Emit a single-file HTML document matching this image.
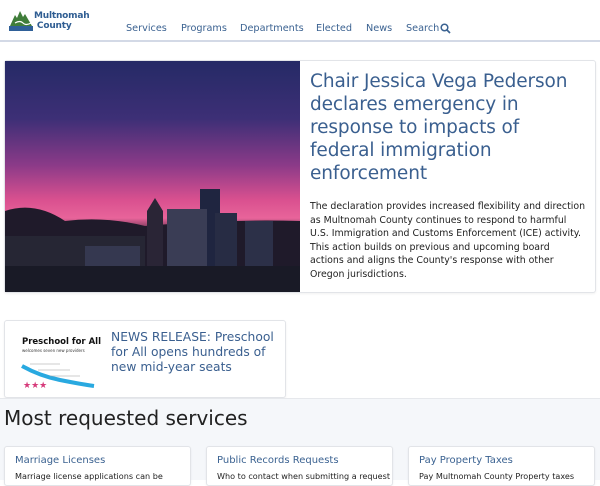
<!DOCTYPE html>
<html><head><meta charset="utf-8"><style>
*{box-sizing:border-box;margin:0;padding:0}
body{width:600px;height:480px;overflow:hidden;background:#fff;font-family:"DejaVu Sans","Liberation Sans",sans-serif;position:relative}
.abs{position:absolute}
.nav{position:absolute;top:23px;font-size:9.7px;line-height:12px;color:#3b6291;white-space:nowrap}
.hdrline{top:40px;left:0;width:600px;height:2px;background:#d3d9e6}
.card{border:1px solid #e2e4e8;border-radius:3px;background:#fff;box-shadow:0 1px 2px rgba(0,0,0,.06)}
.h1{left:310px;top:70px;width:268px;font-size:18.5px;line-height:23px;color:#3a5f8f;letter-spacing:-.1px}
.p1{left:310px;top:200px;width:278px;font-size:9.4px;line-height:13.6px;color:#222;white-space:nowrap}
.scard{top:446px;height:40px;width:187px}
.st{font-size:10px;color:#3b6291;position:absolute;left:10px;top:8px;white-space:nowrap}
.sd{font-size:8.1px;color:#222;position:absolute;left:10px;top:24px;white-space:nowrap}
</style></head><body>
<svg class="abs" style="left:9px;top:9px" width="26" height="24" viewBox="0 0 26 24">
<path d="M1 17 L6 6 L8 9 L11 2 L14 8 L16 5 L23 17 Z" fill="#3f7d3a"/>
<path d="M6 14 Q11 11 14 14 T22 14" stroke="#fff" stroke-width="1.2" fill="none"/>
<path d="M0 17 H24 V22 H0 Z" fill="#2f6098"/>
</svg>
<div class="abs" style="left:34px;top:12px;font-size:9px;line-height:9.5px;font-weight:bold;color:#2f5d92;letter-spacing:-.2px">Multnomah<br>&nbsp;County</div>
<div class="nav" style="left:126px">Services</div>
<div class="nav" style="left:181px">Programs</div>
<div class="nav" style="left:240px">Departments</div>
<div class="nav" style="left:316px">Elected</div>
<div class="nav" style="left:366px">News</div>
<div class="nav" style="left:406px">Search</div>
<svg class="abs" style="left:440px;top:23px" width="11" height="11" viewBox="0 0 11 11"><circle cx="4.5" cy="4.5" r="3.3" stroke="#3b6291" stroke-width="1.5" fill="none"/><path d="M7 7 L10 10" stroke="#3b6291" stroke-width="1.7"/></svg>
<div class="abs hdrline"></div>

<div class="abs card" style="left:4px;top:60px;width:592px;height:233px"></div>
<svg class="abs" style="left:5px;top:61px" width="295" height="231" viewBox="0 0 295 231">
<defs><linearGradient id="g" x1="0" y1="0" x2="0" y2="1">
<stop offset="0" stop-color="#252a66"/><stop offset=".25" stop-color="#3d2f76"/><stop offset=".45" stop-color="#8b3a88"/><stop offset=".6" stop-color="#d9508f"/><stop offset=".68" stop-color="#e8649a"/><stop offset=".75" stop-color="#3a2238"/><stop offset="1" stop-color="#16161f"/></linearGradient></defs>
<rect width="295" height="231" fill="url(#g)"/>
<path d="M0 150 Q30 140 60 160 Q100 155 140 165 Q220 158 295 160 V231 H0Z" fill="#1f1a2a"/>
<rect x="195" y="128" width="20" height="103" fill="#1f2540"/>
<path d="M142 150 L150 137 L158 150 V231 H142Z" fill="#2a2536"/>
<rect x="162" y="148" width="40" height="83" fill="#3a3d55"/>
<rect x="210" y="152" width="22" height="79" fill="#272c44"/>
<rect x="240" y="160" width="28" height="71" fill="#2c3048"/>
<rect x="0" y="175" width="140" height="56" fill="#262634"/>
<rect x="80" y="185" width="55" height="46" fill="#353850"/>
<rect x="0" y="205" width="295" height="26" fill="#191a26"/>
</svg>
<div class="abs h1">Chair Jessica Vega Pederson declares emergency in response to impacts of federal immigration enforcement</div>
<div class="abs p1">The declaration provides increased flexibility and direction<br>as Multnomah County continues to respond to harmful<br>U.S. Immigration and Customs Enforcement (ICE) activity.<br>This action builds on previous and upcoming board<br>actions and aligns the County's response with other<br>Oregon jurisdictions.</div>

<div class="abs card" style="left:4px;top:320px;width:282px;height:78px"></div>
<div class="abs" style="left:22px;top:337px;font-size:8.5px;font-weight:bold;color:#111">Preschool for All</div>
<div class="abs" style="left:22px;top:348px;font-size:4px;color:#333">welcomes seven new providers</div>
<svg class="abs" style="left:20px;top:354px" width="76" height="38" viewBox="0 0 76 38">
<path d="M2 12 Q20 22 40 26 T74 32" stroke="#29a9e0" stroke-width="4" fill="none"/>
<path d="M10 10 H40 M18 16 H50 M30 22 H60" stroke="#999" stroke-width=".6"/>
<text x="3" y="34" font-size="9" fill="#d63a7a">★★★</text>
</svg>
<div class="abs" style="left:111px;top:330px;width:170px;font-size:12.3px;line-height:15px;color:#3a5f8f">NEWS RELEASE: Preschool for All opens hundreds of new mid-year seats</div>

<div class="abs" style="left:0;top:398px;width:600px;height:82px;background:#f5f7fa;border-top:1px solid #e6e8ec"></div>
<div class="abs" style="left:4px;top:406px;font-size:20px;color:#222">Most requested services</div>
<div class="abs card scard" style="left:4px"><div class="st">Marriage Licenses</div><div class="sd">Marriage license applications can be</div></div>
<div class="abs card scard" style="left:206px"><div class="st">Public Records Requests</div><div class="sd">Who to contact when submitting a request</div></div>
<div class="abs card scard" style="left:408px"><div class="st">Pay Property Taxes</div><div class="sd">Pay Multnomah County Property taxes</div></div>
</body></html>
